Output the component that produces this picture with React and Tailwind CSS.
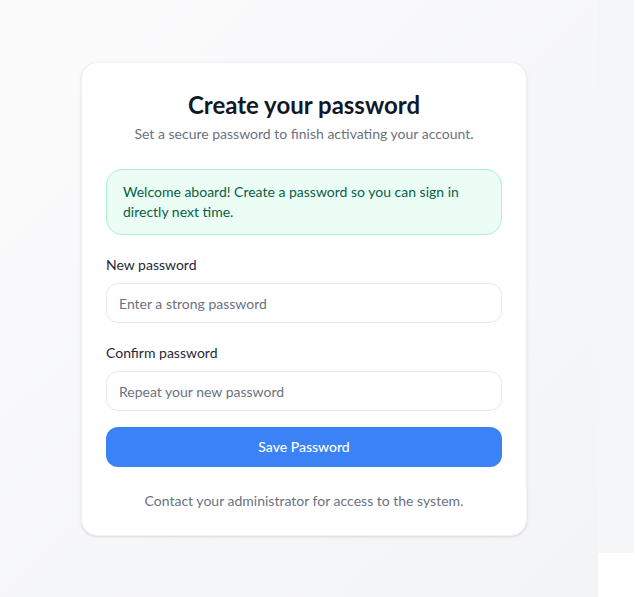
import { useState } from 'react';

// password setup page for invited users
function PasswordField({ label, placeholder, value, onChange }) {
  return (
    <div className="mt-5 flex flex-col">
      <label className="text-sm leading-5 text-[#1f2937]">{label}</label>
      <input
        type="password"
        placeholder={placeholder}
        value={value}
        onChange={(e) => onChange(e.target.value)}
        className="mt-2 h-10 w-full rounded-xl border border-[#e5e7eb] bg-white px-3 text-sm text-[#1f2937] outline-none placeholder:text-[#6b7280]"
      />
    </div>
  );
}

export default function App() {
  const [password, setPassword] = useState('');
  const [confirm, setConfirm] = useState('');

  return (
    <div className="flex h-[597px] w-[635px] font-['Lato','Liberation_Sans',sans-serif]">
      <div className="flex h-full w-[598px] justify-center bg-gradient-to-br from-[#fbfbfc] to-[#f3f4f6] pl-[10px] pt-[62px]">
        <div className="h-fit w-[446px] rounded-2xl border border-[#f0f1f3] bg-white px-6 pb-6 pt-7 shadow-sm">
          <h1 className="text-center text-2xl font-bold leading-7 text-[#111827]">Create your password</h1>
          <p className="mt-[5px] text-center text-sm leading-5 text-[#6b7280]">
            Set a secure password to finish activating your account.
          </p>

          <div className="mt-[25px] rounded-2xl border border-[#a7f3d0] bg-[#ecfdf5] px-4 py-3 text-sm leading-5 text-[#065f46]">
            Welcome aboard! Create a password so you can sign in directly next time.
          </div>

          <PasswordField label="New password" placeholder="Enter a strong password" value={password} onChange={setPassword} />
          <PasswordField label="Confirm password" placeholder="Repeat your new password" value={confirm} onChange={setConfirm} />

          <button className="mt-4 h-10 w-full rounded-xl bg-[#3b82f6] text-sm font-medium text-white">
            Save Password
          </button>

          <p className="mt-6 text-center text-sm leading-5 text-[#6b7280]">
            Contact your administrator for access to the system.
          </p>
        </div>
      </div>
      <div className="flex w-[36px] flex-col">
        <div className="h-[553px] bg-[#f5f6f8]" />
        <div className="flex-1 bg-white" />
      </div>
    </div>
  );
}
